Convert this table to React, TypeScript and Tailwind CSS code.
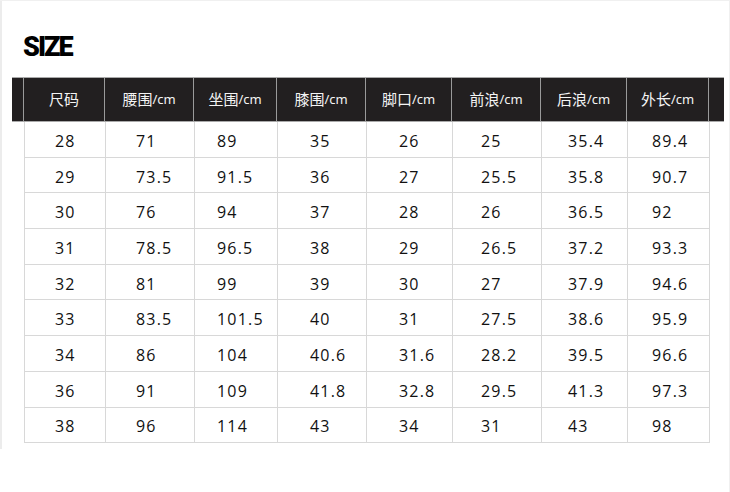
const columns = [
  { w: 'w-[81px]', pad: 'pl-[30px]', cn: '尺码', unit: '' },
  { w: 'w-[89px]', pad: 'pl-[30px]', cn: '腰围', unit: '/cm' },
  { w: 'w-[83px]', pad: 'pl-[22px]', cn: '坐围', unit: '/cm' },
  { w: 'w-[89px]', pad: 'pl-[32px]', cn: '膝围', unit: '/cm' },
  { w: 'w-[86px]', pad: 'pl-[32px]', cn: '脚口', unit: '/cm' },
  { w: 'w-[89px]', pad: 'pl-[28px]', cn: '前浪', unit: '/cm' },
  { w: 'w-[86px]', pad: 'pl-[26px]', cn: '后浪 ', unit: '/cm' },
  { w: 'w-[82px]', pad: 'pl-[24px]', cn: '外长', unit: '/cm' },
];

const rows = [
  ['28', '71', '89', '35', '26', '25', '35.4', '89.4'],
  ['29', '73.5', '91.5', '36', '27', '25.5', '35.8', '90.7'],
  ['30', '76', '94', '37', '28', '26', '36.5', '92'],
  ['31', '78.5', '96.5', '38', '29', '26.5', '37.2', '93.3'],
  ['32', '81', '99', '39', '30', '27', '37.9', '94.6'],
  ['33', '83.5', '101.5', '40', '31', '27.5', '38.6', '95.9'],
  ['34', '86', '104', '40.6', '31.6', '28.2', '39.5', '96.6'],
  ['36', '91', '109', '41.8', '32.8', '29.5', '41.3', '97.3'],
  ['38', '96', '114', '43', '34', '31', '43', '98'],
];

export default function App() {
  return (
    <div className="w-[730px] h-[492px] bg-white overflow-hidden border-t border-r border-[#f0f0f0] font-['Noto_Sans','Noto_Sans_CJK_SC',sans-serif]">
      <div className="flex">
        <div className="w-[2px] h-[448px] bg-[#ececec]" />
        <div className="flex-1">
          <div className="h-[31px]" />
          <h1 className="ml-[21px] h-[30px] text-[27px] leading-[30px] font-black tracking-[-2px] text-black font-['Roboto','Liberation_Sans',sans-serif]">
            SIZE
          </h1>
          <div className="h-[15px]" />

          <div className="ml-[10px] w-[712px] flex h-[45px] bg-[#221f20] border-y border-[#aaa]">
            <div className="w-[12px] border-r border-[#9a9a9a]" />
            {columns.map((c) => (
              <div
                key={c.cn}
                className={`${c.w} flex items-center justify-center border-r border-[#9a9a9a] text-[#f4f4f4] text-[15px] font-['Noto_Sans_CJK_SC',sans-serif]`}
              >
                <span>{c.cn}</span>
                {c.unit && <span className="text-[13px] font-['Noto_Sans',sans-serif]">{c.unit}</span>}
              </div>
            ))}
            <div className="flex-1" />
          </div>

          <div className="ml-[22px] w-[686px] border-l border-[#d8d8d8]">
            {rows.map((r) => (
              <div key={r[0]} className="flex h-[35.7px] border-b border-[#d8d8d8]">
                {r.map((v, i) => (
                  <div
                    key={i}
                    className={`${columns[i].w} ${columns[i].pad} flex items-center pt-[3px] border-r border-[#d8d8d8] text-[16px] tracking-[1.2px] text-[#111] font-['Open_Sans','Noto_Sans',sans-serif]`}
                  >
                    {v}
                  </div>
                ))}
              </div>
            ))}
          </div>
        </div>
      </div>
    </div>
  );
}
